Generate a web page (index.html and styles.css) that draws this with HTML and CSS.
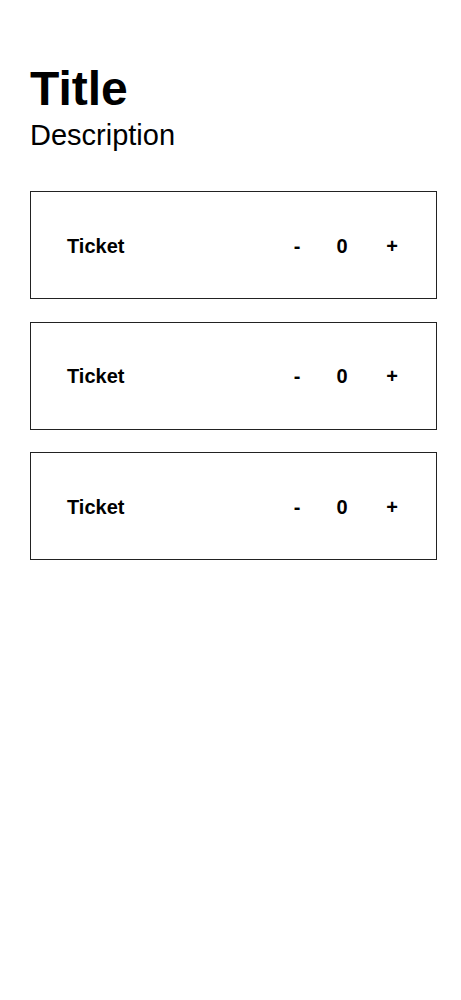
FILE: index.html
```html
<!DOCTYPE html>
<html>
<head>
    <title>Tickets</title>
    <link rel="stylesheet" href="styles.css">
</head>
<body>
    <div class="page">
        <h1 class="title">Title</h1>
        <p class="description">Description</p>

        <div class="tickets">
            <div class="ticket">
                <span class="ticket-name">Ticket</span>
                <div class="counter">
                    <span class="step" onclick="change(this, -1)">-</span>
                    <span class="count">0</span>
                    <span class="step" onclick="change(this, 1)">+</span>
                </div>
            </div>
            <div class="ticket">
                <span class="ticket-name">Ticket</span>
                <div class="counter">
                    <span class="step" onclick="change(this, -1)">-</span>
                    <span class="count">0</span>
                    <span class="step" onclick="change(this, 1)">+</span>
                </div>
            </div>
            <div class="ticket">
                <span class="ticket-name">Ticket</span>
                <div class="counter">
                    <span class="step" onclick="change(this, -1)">-</span>
                    <span class="count">0</span>
                    <span class="step" onclick="change(this, 1)">+</span>
                </div>
            </div>
        </div>
    </div>

    <script>
        function change(el, delta) {
            const count = el.parentNode.querySelector('.count');
            let value = parseInt(count.textContent) + delta;
            if (value < 0) value = 0;
            count.textContent = value;
        }
    </script>
</body>
</html>
```

FILE: styles.css
```css
body {
    margin: 0;
    font-family: "Liberation Sans", Arial, sans-serif;
    background-color: white;
    color: black;
}
.page {
    padding: 61px 24px 0 30px;
}
.title {
    margin: 0;
    font-size: 48px;
    font-weight: bold;
    line-height: 55px;
}
.description {
    margin: 3px 0 0;
    font-size: 29px;
    line-height: 33px;
}
.tickets {
    margin-top: 39px;
    display: flex;
    flex-direction: column;
    gap: 22.5px;
}
.ticket {
    box-sizing: border-box;
    height: 108px;
    border: 1px solid #222;
    padding: 2px 34px 0 36px;
    display: flex;
    align-items: center;
    justify-content: space-between;
}
.ticket-name {
    font-size: 20px;
    font-weight: bold;
}
.counter {
    display: flex;
    gap: 25px;
    font-size: 20px;
    font-weight: bold;
}
.counter span {
    width: 20px;
    text-align: center;
}
.counter .count {
    margin-right: 5px;
}
.step {
    cursor: pointer;
}
```
